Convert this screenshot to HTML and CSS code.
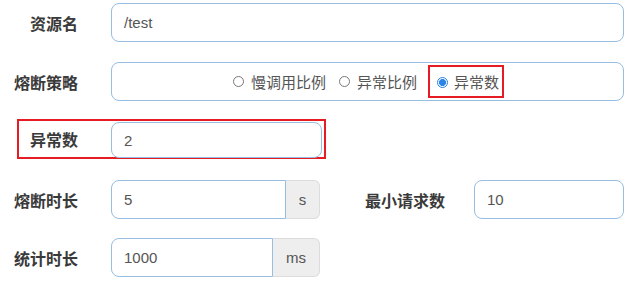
FILE: index.html
```html
<!DOCTYPE html>
<html lang="zh">
<head>
<meta charset="utf-8">
<link rel="stylesheet" href="styles.css">
</head>
<body>
<form class="form">
  <div class="row row-1">
    <label class="label">资源名</label>
    <div class="input input-full">/test</div>
  </div>
  <div class="row row-2">
    <label class="label">熔断策略</label>
    <div class="input input-full radios">
      <span class="opt"><span class="radio"></span>慢调用比例</span>
      <span class="opt"><span class="radio"></span>异常比例</span>
      <span class="opt opt-mark"><span class="radio radio-on"></span>异常数</span>
    </div>
  </div>
  <div class="row row-3">
    <div class="mark-box">
      <label class="label label-in">异常数</label>
      <div class="input input-count">2</div>
    </div>
  </div>
  <div class="row row-4">
    <label class="label">熔断时长</label>
    <div class="group">
      <div class="input input-grp input-s">5</div>
      <div class="addon addon-s">s</div>
    </div>
    <label class="label label-min">最小请求数</label>
    <div class="input input-min">10</div>
  </div>
  <div class="row row-5">
    <label class="label">统计时长</label>
    <div class="group">
      <div class="input input-grp input-ms">1000</div>
      <div class="addon addon-ms">ms</div>
    </div>
  </div>
</form>
</body>
</html>
```

FILE: styles.css
```css
html, body {
  margin: 0;
  padding: 0;
  background: #ffffff;
}
body {
  font-family: "Liberation Sans", "Noto Sans CJK SC", sans-serif;
  color: #555;
}
.form {
  display: flex;
  flex-direction: column;
  padding-top: 3px;
}
.row {
  display: flex;
  align-items: center;
}
.row-2 { margin-top: 20px; }
.row-3 { margin-top: 18px; }
.row-4 { margin-top: 21px; }
.row-5 { margin-top: 19px; }

.label {
  width: 78px;
  flex: none;
  text-align: right;
  margin-right: 33px;
  font-family: "Noto Sans CJK SC", sans-serif;
  font-weight: bold;
  font-size: 16px;
  color: #3a3a3a;
  line-height: 20px;
}
.input {
  box-sizing: border-box;
  height: 39px;
  border: 1.5px solid #97bde0;
  border-radius: 8px;
  padding: 0 12px;
  display: flex;
  align-items: center;
  font-size: 15px;
  color: #555;
  background: #fff;
}
.input-full { width: 513px; }

.radios {
  justify-content: center;
  gap: 13px;
  font-family: "Noto Sans CJK SC", sans-serif;
  font-size: 15px;
  color: #555;
  padding-left: 0;
  padding-right: 0;
}
.opt {
  display: flex;
  align-items: center;
  gap: 7px;
  line-height: 20px;
}
.opt-mark {
  outline: 2px solid #e51c23;
  outline-offset: 0;
  padding: 5px 3px 4px 7px;
  gap: 6px;
}
.radio {
  box-sizing: border-box;
  width: 11px;
  height: 11px;
  border: 1px solid #777;
  border-radius: 50%;
  background: #fff;
}
.radio-on {
  border: 1px solid #2a7fd6;
  background: radial-gradient(circle, #2a86e8 0 3.2px, #fff 3.8px);
}

.mark-box {
  box-sizing: border-box;
  margin-left: 17px;
  width: 309px;
  height: 40px;
  border: 2px solid #e51c23;
  display: flex;
  align-items: center;
}
.label-in {
  width: 59px;
}
.input-count {
  width: 211px;
  height: 36px;
  margin-top: 2px;
}

.group {
  display: flex;
  width: 209px;
}
.input-grp {
  border-radius: 8px 0 0 8px;
}
.input-s { width: 175px; }
.input-ms { width: 162px; }
.addon {
  box-sizing: border-box;
  height: 39px;
  flex: 1;
  background: #eeeeee;
  border: 1px solid #dcdcdc;
  border-left: none;
  border-radius: 0 6px 6px 0;
  display: flex;
  align-items: center;
  justify-content: center;
  font-size: 15px;
  color: #555;
}
.label-min {
  width: 83px;
  margin-left: 42px;
  margin-right: 29px;
}
.input-min {
  width: 150px;
}
```
